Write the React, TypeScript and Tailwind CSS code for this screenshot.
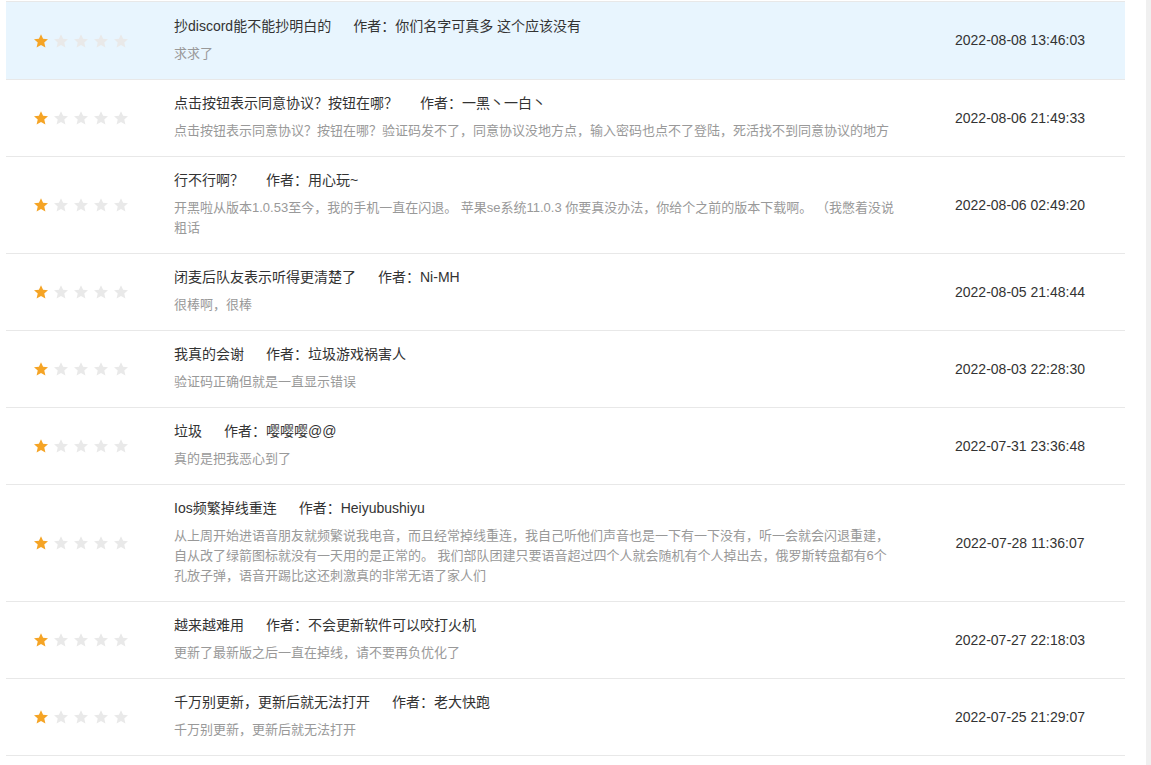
import React from 'react';

type Review = {
  title: string;
  author: string;
  content: string;
  time: string;
  rating: number;
};

const reviews: Review[] = [
  { title: '抄discord能不能抄明白的', author: '你们名字可真多 这个应该没有', content: '求求了', time: '2022-08-08 13:46:03', rating: 1 },
  { title: '点击按钮表示同意协议？按钮在哪？', author: '一黑丶一白丶', content: '点击按钮表示同意协议？按钮在哪？验证码发不了，同意协议没地方点，输入密码也点不了登陆，死活找不到同意协议的地方', time: '2022-08-06 21:49:33', rating: 1 },
  { title: '行不行啊？', author: '用心玩~', content: '开黑啦从版本1.0.53至今，我的手机一直在闪退。 苹果se系统11.0.3 你要真没办法，你给个之前的版本下载啊。 （我憋着没说粗话', time: '2022-08-06 02:49:20', rating: 1 },
  { title: '闭麦后队友表示听得更清楚了', author: 'Ni-MH', content: '很棒啊，很棒', time: '2022-08-05 21:48:44', rating: 1 },
  { title: '我真的会谢', author: '垃圾游戏祸害人', content: '验证码正确但就是一直显示错误', time: '2022-08-03 22:28:30', rating: 1 },
  { title: '垃圾', author: '嘤嘤嘤@@', content: '真的是把我恶心到了', time: '2022-07-31 23:36:48', rating: 1 },
  { title: 'Ios频繁掉线重连', author: 'Heiyubushiyu', content: '从上周开始进语音朋友就频繁说我电音，而且经常掉线重连，我自己听他们声音也是一下有一下没有，听一会就会闪退重建，自从改了绿箭图标就没有一天用的是正常的。 我们部队团建只要语音超过四个人就会随机有个人掉出去，俄罗斯转盘都有6个孔放子弹，语音开踢比这还刺激真的非常无语了家人们', time: '2022-07-28 11:36:07', rating: 1 },
  { title: '越来越难用', author: '不会更新软件可以咬打火机', content: '更新了最新版之后一直在掉线，请不要再负优化了', time: '2022-07-27 22:18:03', rating: 1 },
  { title: '千万别更新，更新后就无法打开', author: '老大快跑', content: '千万别更新，更新后就无法打开', time: '2022-07-25 21:29:07', rating: 1 },
];

const Star = ({ on }: { on: boolean }) => (
  <svg width="16" height="16" viewBox="0 0 24 24" className="shrink-0">
    <path
      d="M12 1.8l3.1 6.9 7.4.7-5.6 5 1.7 7.4L12 17.9l-6.6 3.9 1.7-7.4-5.6-5 7.4-.7z"
      fill={on ? '#f5a425' : '#e9e9e9'}
    />
  </svg>
);

const ReviewRow = ({ review, active }: { review: Review; active?: boolean }) => (
  <div className={`flex border-b border-[#e8e8e8] ${active ? 'bg-[#e8f5fe]' : 'bg-white'}`}>
    <div className="w-[168px] shrink-0 flex items-center gap-1 pl-[27px]">
      {[0, 1, 2, 3, 4].map((i) => (
        <Star key={i} on={i < review.rating} />
      ))}
    </div>
    <div className={`w-[723px] shrink-0 pb-[15px] ${active ? 'pt-[14px]' : 'pt-[13px]'}`}>
      <div className="text-[14px] leading-[20px] text-[#333]">
        <span>{review.title}</span>
        <span className="ml-[22px]">作者：{review.author}</span>
      </div>
      <div className="mt-[8px] text-[13px] leading-[20px] text-[#999]">{review.content}</div>
    </div>
    <div className="flex-1 flex items-center justify-center text-[14px] text-[#333] pl-[18px]">
      {review.time}
    </div>
  </div>
);

export default function App() {
  return (
    <div
      className="h-[765px] w-[1151px] overflow-hidden bg-white flex"
      style={{ fontFamily: '"Liberation Sans", Arial, "Noto Sans CJK SC", sans-serif' }}
    >
      <div className="w-[1119px] ml-[6px] pt-px">
        <div className="border-t border-[#e8e8e8]">
          {reviews.map((r, i) => (
            <ReviewRow key={i} review={r} active={i === 0} />
          ))}
        </div>
      </div>
      <div className="flex-1" />
      <div className="w-[5px] h-full bg-[#f0f0f0]" />
    </div>
  );
}
